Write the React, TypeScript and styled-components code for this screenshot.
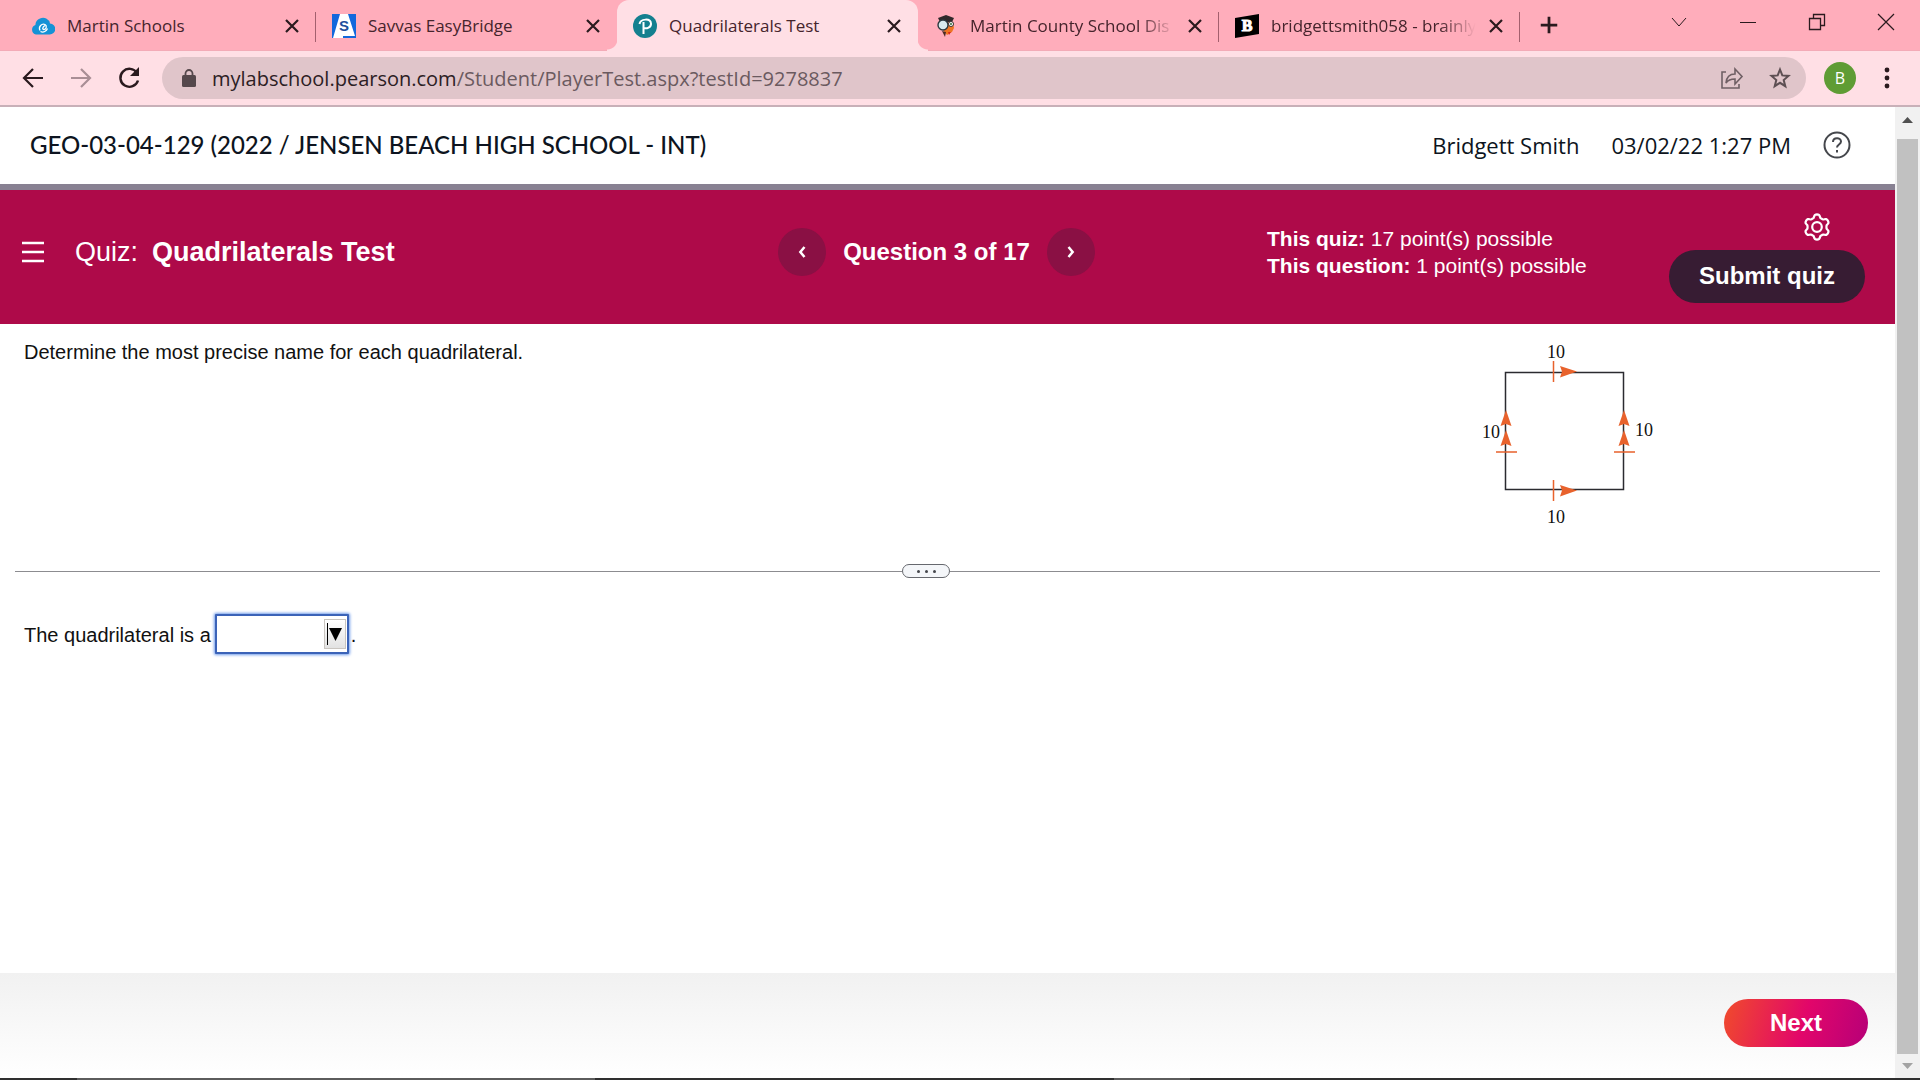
import React from "react";
import styled, { createGlobalStyle, css } from "styled-components";

const sans = `"Liberation Sans", Arial, sans-serif`;
const ui = `"Open Sans", "Segoe UI", sans-serif`;

const GlobalStyle = createGlobalStyle`
  *, *::before, *::after { box-sizing: border-box; }
  body { margin: 0; background: #fff; font-family: ${sans}; color: #111; }
  button { border: 0; padding: 0; background: none; color: inherit; font: inherit; cursor: pointer; }
  svg { display: block; flex: none; }
  p, h1, h2 { margin: 0; }
`;

const Window = styled.div`
  display: flex;
  flex-direction: column;
  height: 100vh;
  overflow: hidden;
`;

/* ---------- browser chrome ---------- */

const TabStrip = styled.div`
  display: flex;
  align-items: stretch;
  height: 51px;
  padding-left: 15px;
  background: #ffadbb;
  border-bottom: 1px solid #f3abb7;
`;

const Tab = styled.div<{ $active?: boolean; $divider?: boolean }>`
  position: relative;
  display: flex;
  align-items: center;
  flex: 0 1 301px;
  min-width: 0;
  gap: 12px;
  margin-bottom: -1px;
  padding: 0 14px 0 16px;
  ${(p) =>
    p.$divider &&
    css`
      &::after {
        content: "";
        position: absolute;
        right: 0;
        top: 12px;
        height: 30px;
        width: 1px;
        background: #a3606e;
      }
    `}
  ${(p) =>
    p.$active &&
    css`
      background: #ffdfe5;
      border-radius: 12px 12px 0 0;
      &::before,
      &::after {
        content: "";
        position: absolute;
        bottom: 0;
        width: 10px;
        height: 12px;
      }
      &::before {
        left: -10px;
        background: radial-gradient(circle at 0 0, transparent 10px, #ffdfe5 11px);
      }
      &::after {
        right: -10px;
        background: radial-gradient(circle at 100% 0, transparent 10px, #ffdfe5 11px);
      }
    `}
`;

const TabTitle = styled.span<{ $fade?: boolean }>`
  flex: 1;
  margin-right: -8px;
  overflow: hidden;
  white-space: nowrap;
  font: 400 17px/24px ${ui};
  color: #45242c;
  ${(p) => p.$fade && css`mask-image: linear-gradient(to right, #000 80%, transparent 97%);`}
`;

const IconButton = styled.button<{ $w?: number }>`
  display: flex;
  align-items: center;
  justify-content: center;
  flex: none;
  width: ${(p) => p.$w ?? 20}px;
  height: 30px;
`;

const NewTab = styled(IconButton)`
  align-self: center;
  margin-left: 13px;
`;

const WindowControls = styled.div`
  display: flex;
  align-items: flex-start;
  margin-left: auto;
  padding-top: 7px;
`;

const Toolbar = styled.div`
  display: flex;
  align-items: center;
  height: 56px;
  padding: 0 21px 0 20px;
  background: #ffdfe5;
  border-bottom: 2px solid #c8b0b8;
`;

const NavButtons = styled.div`
  display: flex;
  gap: 22px;
  margin-right: 20px;
`;

const AddressBar = styled.div`
  display: flex;
  align-items: center;
  flex: 1;
  height: 42px;
  padding: 0 14px 0 20px;
  border-radius: 21px;
  background: #e0c5ca;
  gap: 16px;
`;

const Address = styled.div`
  flex: 1;
  padding-top: 1px;
  font: 400 20px/28px ${ui};
  color: #6b5a5f;
  white-space: nowrap;
  b { font-weight: 400; color: #2c2024; }
`;

const Avatar = styled.button`
  display: grid;
  place-items: center;
  width: 32px;
  height: 32px;
  margin: 0 19px 0 18px;
  border-radius: 50%;
  background: #5f9c34;
  color: #fff;
  font: 400 16px/20px ${ui};
`;

/* ---------- page ---------- */

const Viewport = styled.div`
  display: flex;
  flex: 1;
  min-height: 0;
`;

const Page = styled.div`
  display: flex;
  flex-direction: column;
  flex: 1;
  min-width: 0;
`;

const CourseBar = styled.header`
  display: flex;
  align-items: center;
  height: 83px;
  padding: 0 44px 2px 30px;
  border-bottom: 6px solid #888192;
  color: #0d1420;
`;

const CourseTitle = styled.h1`
  flex: 1;
  font: 500 24px/32px Lato, sans-serif;
`;

const UserInfo = styled.div`
  display: flex;
  align-items: center;
  gap: 32px;
  font: 400 22px/30px ${ui};
`;

const QuizBar = styled.section`
  display: grid;
  grid-template-columns: 778fr 317fr 172fr 373fr 255fr;
  align-items: center;
  height: 134px;
  padding-bottom: 10px;
  background: #ae0a49;
  color: #fff;
`;

const QuizName = styled.div`
  display: flex;
  align-items: center;
  padding-left: 20px;
  font-size: 27px;
  line-height: 32px;
  h2 { margin-left: 14px; font-size: 27px; line-height: 32px; }
`;

const MenuButton = styled(IconButton)`
  margin-right: 29px;
`;

const Pager = styled.nav`
  display: flex;
  align-items: center;
  justify-content: space-between;
  font-size: 24px;
  font-weight: 700;
  white-space: nowrap;
`;

const Round = styled.button`
  display: grid;
  place-items: center;
  width: 48px;
  height: 48px;
  border-radius: 50%;
  background: #8a1044;
`;

const Points = styled.div`
  grid-column: 4;
  font-size: 21px;
  line-height: 27px;
  white-space: nowrap;
`;

const QuizActions = styled.div`
  display: flex;
  flex-direction: column;
  align-items: flex-end;
  padding: 10px 30px 0 0;
  gap: 8px;
`;

const SettingsButton = styled(IconButton)`
  margin-right: 34px;
`;

const SubmitButton = styled.button`
  width: 196px;
  height: 53px;
  border-radius: 27px;
  background: #371c33;
  font-size: 24px;
  font-weight: 700;
`;

const Problem = styled.section`
  display: flex;
  justify-content: space-between;
  padding: 14px 235px 23px 24px;
  font-size: 20px;
  line-height: 28px;
`;

const Figure = styled.svg`
  text {
    font: 18px "Liberation Serif", "Times New Roman", serif;
    fill: #111;
  }
`;

const Divider = styled.div`
  display: flex;
  align-items: center;
  margin: 0 15px;
  &::before,
  &::after {
    content: "";
    height: 1px;
    background: #8c8c90;
  }
  &::before { flex: 887; }
  &::after { flex: 930; }
`;

const Handle = styled.button`
  display: flex;
  align-items: center;
  justify-content: center;
  gap: 5px;
  width: 48px;
  height: 14px;
  border: 1px solid #66686e;
  border-radius: 7px;
  background: #f4f6f9;
  i {
    width: 3px;
    height: 3px;
    border-radius: 50%;
    background: #45474c;
  }
`;

const Answer = styled.section`
  display: flex;
  align-items: flex-start;
  flex: 1;
  padding: 36px 24px;
  font-size: 20px;
  line-height: 42px;
`;

const Combo = styled.span`
  position: relative;
  margin: 0 2px 0 4px;
`;

const Select = styled.select`
  display: block;
  appearance: none;
  width: 134px;
  height: 40px;
  border: 2px solid #3b63b8;
  border-radius: 1px;
  outline: 0;
  background: #fff;
  box-shadow: 0 0 3px 1px #6f9bea;
  font: 20px ${sans};
`;

const Arrow = styled.span`
  position: absolute;
  right: 3px;
  top: 5px;
  display: grid;
  place-items: center;
  width: 22px;
  height: 30px;
  border: 1px solid #c9c5c0;
  background: linear-gradient(#fff, #e2e2e2);
  pointer-events: none;
`;

const Footer = styled.footer`
  display: flex;
  align-items: center;
  justify-content: flex-end;
  height: 105px;
  padding: 0 27px 5px 0;
  background: linear-gradient(#f1f1f1, #fff);
`;

const NextButton = styled.button`
  width: 144px;
  height: 48px;
  border-radius: 24px;
  background: linear-gradient(105deg, #ef4531 5%, #e2066a 55%, #b60078);
  color: #fff;
  font-size: 24px;
  font-weight: 700;
`;

const Scrollbar = styled.div`
  display: flex;
  flex-direction: column;
  align-items: center;
  width: 25px;
  background: #f1f1f1;
`;

const Thumb = styled.div`
  flex: 1;
  width: 21px;
  background: #c1c1c1;
`;

const Taskbar = styled.div`
  flex: none;
  height: 2px;
  background: linear-gradient(
    to right,
    #303030 0 4%,
    #5c5c5c 4% 31%,
    #303030 31% 58%,
    #5c5c5c 58% 62%,
    #303030 62%
  );
`;

/* ---------- drawings ---------- */

const CloseIcon = () => (
  <svg width="14" height="14" viewBox="0 0 14 14" stroke="#2a1a1e" strokeWidth="2.2">
    <path d="M1 1l12 12M13 1L1 13" />
  </svg>
);

const CloudIcon = () => (
  <svg width="24" height="24" viewBox="0 0 24 24">
    <path d="M5 20.500a5 5 0 0 1-.6-9.600A7 7 0 0 1 9 4.500a7 7 0 0 1 10 5 5.500 5.500 0 0 1-.5 11z" fill="#1592d6" />
    <path d="M9 16.500c-2-4 2-7.500 5-6 2.500 1.500 1 5-1 5s-1.500-2.500 1-4M9.500 17.500c3 1.500 6-.5 7-3" fill="none" stroke="#fff" strokeWidth="1.300" />
  </svg>
);

const SavvasIcon = () => (
  <svg width="24" height="24" viewBox="0 0 24 24">
    <path d="M0 0h24v24H0z" fill="#1268dc" />
    <path d="M8 0h8l7 22H11v2H1z" fill="#fff" />
    <text x="12" y="17" textAnchor="middle" fontFamily="Liberation Sans" fontWeight="700" fontSize="15" fill="#1e4f9c">S</text>
  </svg>
);

const PearsonIcon = () => (
  <svg width="24" height="24" viewBox="0 0 24 24">
    <circle cx="12" cy="12" r="12" fill="#14808f" />
    <path d="M10.500 20V8M6.500 10c1-5.500 11-6 11.500-.5.300 4-4.500 5.500-7 4.500" fill="none" stroke="#fff" strokeWidth="2" />
  </svg>
);

const MascotIcon = () => (
  <svg width="24" height="24" viewBox="0 0 24 24">
    <path d="M4 4l8-3 8 3-2 4H6z" fill="#30282a" />
    <path d="M8 9l11-1 1 6-2 4-5 3-4-5z" fill="#ee7423" />
    <path d="M8 17l4 1-1 5z" fill="#4b2c22" />
    <path d="M14 18l3 0-2 3z" fill="#d7261e" />
    <circle cx="9" cy="11" r="5" fill="#d9ecef" stroke="#2c3a40" strokeWidth="1.400" />
    <circle cx="17" cy="10" r="2.500" fill="#fff" stroke="#333" />
    <circle cx="17" cy="10" r="1" fill="#2e6b38" />
  </svg>
);

const BrainlyIcon = () => (
  <svg width="24" height="24" viewBox="0 0 24 24">
    <path d="M0 4l24-4v20L0 24z" fill="#000" />
    <text x="12" y="17" textAnchor="middle" fontFamily="Liberation Serif" fontWeight="700" fontSize="16" fill="#fff" stroke="#fff">B</text>
  </svg>
);

const Stroke = ({ d, size = 24, color = "#2a1a1e", width = 2 }: { d: string; size?: number; color?: string; width?: number }) => (
  <svg width={size} height={size} viewBox="0 0 24 24" fill="none" stroke={color} strokeWidth={width}>
    <path d={d} />
  </svg>
);

const GEAR = Array.from({ length: 72 }, (_, i) => {
  const a = (i / 72) * Math.PI * 2;
  const r = 11 + 1.6 * Math.tanh(2 * Math.cos(6 * a));
  return `${(14 + r * Math.sin(a)).toFixed(2)},${(14 - r * Math.cos(a)).toFixed(2)}`;
}).join(" ");

const GearIcon = () => (
  <svg width="28" height="28" viewBox="0 0 28 28" fill="none" stroke="#fff" strokeWidth="2.200">
    <polygon points={GEAR} strokeLinejoin="round" />
    <circle cx="14" cy="14" r="4.800" />
  </svg>
);

const Square = () => (
  <Figure width="180" height="203" viewBox="1480 338 180 203" role="img" aria-label="Square with sides of length 10">
    <rect x="1505.500" y="372.500" width="118" height="117" fill="none" stroke="#2b2b30" strokeWidth="1.500" />
    <g stroke="#e8622c" strokeWidth="1.500">
      <path d="M1553.500 361v21M1553.500 480v21M1496 452h21M1614 452h21" />
    </g>
    <g fill="#e8622c">
      <path d="M1560 366l17 5.500-17 6 2-6z" />
      <path d="M1560 485l17 5.500-17 6 2-6z" />
      {[1506, 1624].map((x) =>
        [410, 430].map((y) => <path key={`${x}-${y}`} d={`M${x} ${y}l5.500 16-5.500-2-5.500 2z`} />),
      )}
    </g>
    <text x="1547" y="358">10</text>
    <text x="1547" y="523">10</text>
    <text x="1482" y="438">10</text>
    <text x="1635" y="436">10</text>
  </Figure>
);

const tabs = [
  { title: "Martin Schools", icon: <CloudIcon />, divider: true },
  { title: "Savvas EasyBridge", icon: <SavvasIcon /> },
  { title: "Quadrilaterals Test", icon: <PearsonIcon />, active: true },
  { title: "Martin County School Dis", icon: <MascotIcon />, divider: true, fade: true },
  { title: "bridgettsmith058 - brainly", icon: <BrainlyIcon />, divider: true, fade: true },
];

export default function App() {
  return (
    <Window>
      <GlobalStyle />
      <TabStrip>
        {tabs.map((t) => (
          <Tab key={t.title} $active={t.active} $divider={t.divider}>
            {t.icon}
            <TabTitle $fade={t.fade}>{t.title}</TabTitle>
            <IconButton aria-label={`Close ${t.title}`}><CloseIcon /></IconButton>
          </Tab>
        ))}
        <NewTab $w={32} aria-label="New tab"><Stroke d="M12 3v18M3 12h18" size={22} width={3} /></NewTab>
        <WindowControls>
          <IconButton $w={69} aria-label="Search tabs"><Stroke d="M5 8l7 8 7-8" width={1} /></IconButton>
          <IconButton $w={69} aria-label="Minimize"><Stroke d="M4 12.500h16" width={1} /></IconButton>
          <IconButton $w={69} aria-label="Restore"><Stroke d="M4.500 8.500h11v11h-11zM8.500 8.500v-4h11v11h-4" width={1.3} /></IconButton>
          <IconButton $w={69} aria-label="Close window"><Stroke d="M4 4l16 16M20 4L4 20" width={1.2} /></IconButton>
        </WindowControls>
      </TabStrip>
      <Toolbar>
        <NavButtons>
          <IconButton $w={26} aria-label="Back"><Stroke d="M22 12H3M12 3l-9 9 9 9" width={2.2} /></IconButton>
          <IconButton $w={26} aria-label="Forward"><Stroke d="M2 12h19M12 3l9 9-9 9" color="#a98e95" width={2.2} /></IconButton>
          <IconButton $w={26} aria-label="Reload">
            <svg width="24" height="24" viewBox="0 0 24 24">
              <path d="M20 7A9 9 0 1 0 21 14.500" fill="none" stroke="#2a1a1e" strokeWidth="2.400" />
              <path d="M22 1v9h-9z" fill="#2a1a1e" />
            </svg>
          </IconButton>
        </NavButtons>
        <AddressBar>
          <svg width="14" height="18" viewBox="0 0 14 18">
            <rect y="6" width="14" height="12" rx="1.500" fill="#55484c" />
            <path d="M3.500 7V4.500a3.500 3.500 0 0 1 7 0V7" fill="none" stroke="#55484c" strokeWidth="1.800" />
          </svg>
          <Address><b>mylabschool.pearson.com</b>/Student/PlayerTest.aspx?testId=9278837</Address>
          <IconButton $w={40} aria-label="Share"><Stroke d="M6 6H2v16h17v-4M6 17c.5-6 4-9 9-9V3l7 7.500-7 7.500v-5c-4 0-7 1-9 4z" color="#6f5f64" width={1.6} /></IconButton>
          <IconButton $w={24} aria-label="Bookmark"><Stroke d="M12 3.500l2.300 5.900 6.200.5-4.800 4.100 1.600 6.200-5.300-3.400-5.300 3.400 1.600-6.200-4.800-4.100 6.200-.5z" color="#5d4f53" /></IconButton>
        </AddressBar>
        <Avatar aria-label="Profile">B</Avatar>
        <IconButton $w={24} aria-label="Menu">
          <svg width="6" height="22" viewBox="0 0 6 22" fill="#2a1a1e"><circle cx="3" cy="3" r="2.400" /><circle cx="3" cy="11" r="2.400" /><circle cx="3" cy="19" r="2.400" /></svg>
        </IconButton>
      </Toolbar>

      <Viewport>
        <Page>
          <CourseBar>
            <CourseTitle>GEO-03-04-129 (2022 / JENSEN BEACH HIGH SCHOOL - INT)</CourseTitle>
            <UserInfo>
              <span>Bridgett Smith</span>
              <time>03/02/22 1:27 PM</time>
              <IconButton $w={28} aria-label="Help">
                <svg width="28" height="28" viewBox="0 0 28 28" fill="none" stroke="#45474c" strokeWidth="2">
                  <circle cx="14" cy="14" r="12.500" />
                  <path d="M10 11c0-5 8-5 8-.5 0 3-4 3-4 6M14 19v2.500" />
                </svg>
              </IconButton>
            </UserInfo>
          </CourseBar>

          <QuizBar>
            <QuizName>
              <MenuButton $w={26} aria-label="Open menu"><Stroke d="M1 3h22M1 12h22M1 21h22" color="#fff" width={2.6} /></MenuButton>
              <span>Quiz:</span>
              <h2>Quadrilaterals Test</h2>
            </QuizName>
            <Pager aria-label="Questions">
              <Round aria-label="Previous question"><Stroke d="M15 6l-5 6 5 6" size={20} color="#fff" width={3} /></Round>
              <span>Question 3 of 17</span>
              <Round aria-label="Next question"><Stroke d="M9 6l5 6-5 6" size={20} color="#fff" width={3} /></Round>
            </Pager>
            <Points>
              <p><b>This quiz:</b> 17 point(s) possible</p>
              <p><b>This question:</b> 1 point(s) possible</p>
            </Points>
            <QuizActions>
              <SettingsButton $w={28} aria-label="Settings"><GearIcon /></SettingsButton>
              <SubmitButton>Submit quiz</SubmitButton>
            </QuizActions>
          </QuizBar>

          <Problem>
            <p>Determine the most precise name for each quadrilateral.</p>
            <Square />
          </Problem>
          <Divider>
            <Handle aria-label="Resize panels"><i /><i /><i /></Handle>
          </Divider>
          <Answer>
            <label htmlFor="shape">The quadrilateral is a</label>
            <Combo>
              <Select id="shape" defaultValue="">
                <option value="" />
              </Select>
              <Arrow>
                <svg width="18" height="24" viewBox="0 0 18 24"><path d="M3 6h13l-6.500 13z" fill="#000" /><path d="M1.500 1v22" stroke="#000" /></svg>
              </Arrow>
            </Combo>
            <span>.</span>
          </Answer>
          <Footer>
            <NextButton>Next</NextButton>
          </Footer>
        </Page>
        <Scrollbar aria-hidden="true">
          <svg width="25" height="32" viewBox="0 0 25 32"><path d="M7 16l5.500-6 5.500 6z" fill="#505050" /></svg>
          <Thumb />
          <svg width="25" height="24" viewBox="0 0 25 24"><path d="M7 9l5.500 6 5.500-6z" fill="#a3a3a3" /></svg>
        </Scrollbar>
      </Viewport>
      <Taskbar />
    </Window>
  );
}
